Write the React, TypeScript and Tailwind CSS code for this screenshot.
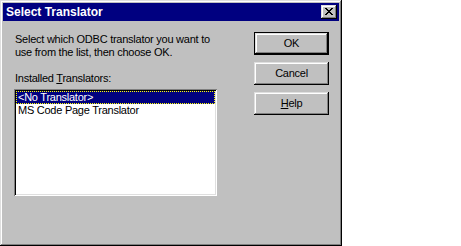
import React from 'react'

const raised = 'shadow-[inset_-1px_-1px_#000000,inset_1px_1px_#dfdfdf,inset_-2px_-2px_#808080,inset_2px_2px_#ffffff]'
const sunken = 'shadow-[inset_1px_1px_#808080,inset_-1px_-1px_#ffffff,inset_2px_2px_#000000,inset_-2px_-2px_#dfdfdf]'

function Btn({ children, isDefault }: { children: React.ReactNode; isDefault?: boolean }) {
  if (isDefault) {
    return (
      <div className="w-[75px] h-[23px] border border-black">
        <div className={`w-full h-full bg-[#c0c0c0] flex items-center justify-center ${raised}`}>{children}</div>
      </div>
    )
  }
  return <div className={`w-[75px] h-[23px] bg-[#c0c0c0] flex items-center justify-center ${raised}`}>{children}</div>
}

export default function App() {
  return (
    <div className="w-[461px] h-[246px] bg-white">
      <div className={`w-[342px] h-[246px] bg-[#c0c0c0] p-[3px] flex flex-col text-[11px] leading-[13px] tracking-[-0.25px] text-black font-['Liberation_Sans',Arial,sans-serif] ${raised}`}>
        {/* title bar */}
        <div className="h-[18px] bg-[#000080] flex items-center justify-between pl-[3px] pr-[2px]">
          <span className="text-white font-bold text-[12px] tracking-normal">Select Translator</span>
          <div className={`w-[16px] h-[14px] bg-[#c0c0c0] flex items-center justify-center ${raised}`}>
            <svg width="8" height="7" viewBox="0 0 8 7" shapeRendering="crispEdges" className="mb-px">
              <path d="M0 0h2v1h-2zM6 0h2v1h-2zM1 1h2v1h-2zM5 1h2v1h-2zM2 2h4v1h-4zM3 3h2v1h-2zM2 4h4v1h-4zM1 5h2v1h-2zM5 5h2v1h-2zM0 6h2v1h-2zM6 6h2v1h-2z" fill="#000" />
            </svg>
          </div>
        </div>

        <div className="flex flex-1">
          {/* left side */}
          <div className="pl-[11px] pt-[12px] w-[214px]">
            <p className="ml-px whitespace-nowrap">Select which ODBC translator you want to<br />use from the list, then choose OK.</p>
            <p className="ml-px mt-[13px] whitespace-nowrap">Installed <u>T</u>ranslators:</p>
            <div className={`mt-[4px] w-[203px] h-[107px] bg-white p-[2px] ${sunken}`}>
              <div className="h-[13px] bg-[#000080] text-white pl-[2px] outline outline-1 outline-dotted outline-[#ffff00] -outline-offset-1">&lt;No Translator&gt;</div>
              <div className="h-[13px] pl-[2px]">MS Code Page Translator</div>
            </div>
          </div>

          {/* buttons */}
          <div className="ml-[37px] pt-[11px] flex flex-col gap-[7px]">
            <Btn isDefault>OK</Btn>
            <Btn>Cancel</Btn>
            <Btn><span><u>H</u>elp</span></Btn>
          </div>
        </div>
      </div>
    </div>
  )
}
